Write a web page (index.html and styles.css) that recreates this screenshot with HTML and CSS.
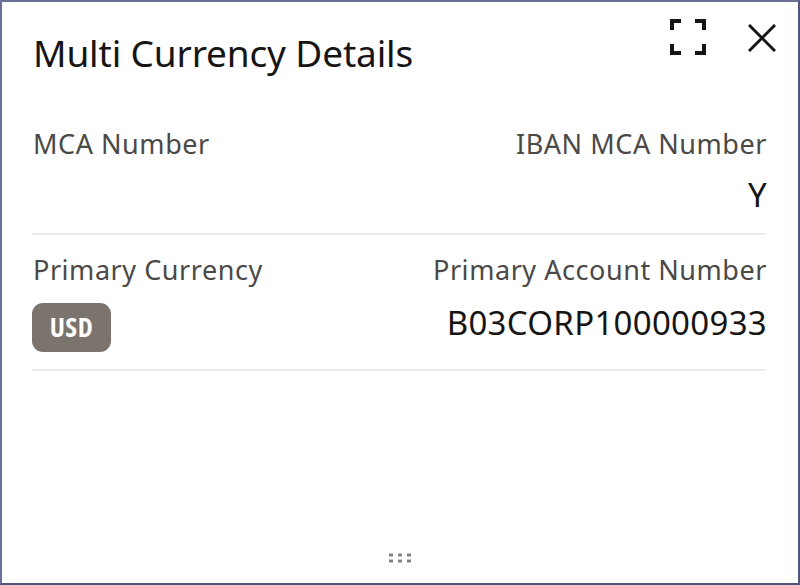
FILE: index.html
```html
<!DOCTYPE html>
<html lang="en">
<head>
<meta charset="UTF-8" />
<meta name="viewport" content="width=device-width, initial-scale=1.0" />
<title>Multi Currency Details</title>
<link rel="stylesheet" href="styles.css">
</head>
<body>

<div class="widget">
  <div class="header">
    <h2>Multi Currency Details</h2>
    <div class="actions">
      <button class="icon-btn" aria-label="Expand">
        <svg class="icon-expand" viewBox="0 0 36 36">
          <path d="M2 11V2H11M25 2H34V11M34 25V34H25M11 34H2V25" />
        </svg>
      </button>
      <button class="icon-btn" aria-label="Close">
        <svg class="icon-close" viewBox="0 0 28 28">
          <path d="M1 1L27 27M27 1L1 27" />
        </svg>
      </button>
    </div>
  </div>

  <div class="row">
    <div class="field">
      <div class="label">MCA Number</div>
    </div>
    <div class="field right">
      <div class="label">IBAN MCA Number</div>
      <div class="value value-y">Y</div>
    </div>
  </div>

  <div class="row row-primary">
    <div class="field">
      <div class="label">Primary Currency</div>
      <div class="badge">USD</div>
    </div>
    <div class="field right">
      <div class="label">Primary Account Number</div>
      <div class="value">B03CORP100000933</div>
    </div>
  </div>

  <div class="handle">
    <svg viewBox="0 0 22 10">
      <path d="M0 2H4M9 2H13M18 2H22M0 8H4M9 8H13M18 8H22" />
    </svg>
  </div>
</div>

</body>
</html>
```
FILE: styles.css
```css
body {
  font-family: "Noto Sans", "Open Sans", sans-serif;
  margin: 0;
  background: #fff;
  color: #161513;
}

.widget {
  display: flex;
  flex-direction: column;
  box-sizing: border-box;
  height: 585px;
  padding: 0 32px 0 30px;
  border: 2px solid #6c7098;
  border-right-color: #50557a;
  border-bottom-color: #50557a;
}

.header {
  display: flex;
  justify-content: space-between;
  height: 114px;
}

h2 {
  margin: 24px 0 0 1px;
  font-size: 37px;
  line-height: 54px;
  font-weight: 400;
  letter-spacing: -0.15px;
  white-space: nowrap;
}

.actions {
  display: flex;
  align-items: flex-start;
  gap: 42px;
  margin: 17px -10px 0 0;
}

.icon-btn {
  display: block;
  padding: 0;
  border: none;
  background: none;
  cursor: pointer;
}

.icon-btn svg {
  display: block;
  fill: none;
  stroke: #161513;
}

.icon-expand {
  width: 36px;
  height: 36px;
  stroke-width: 4;
}

.icon-close {
  width: 28px;
  height: 28px;
  margin-top: 5px;
  stroke-width: 3;
}

.row {
  display: flex;
  justify-content: space-between;
  box-sizing: border-box;
  height: 119px;
  padding-top: 8px;
  border-bottom: 2px solid #ececec;
}

.row-primary {
  height: 136px;
  padding-top: 15px;
}

.right {
  text-align: right;
}

.label {
  margin: 0 -1px 0 1px;
  font-size: 27px;
  line-height: 40px;
  letter-spacing: 0.55px;
  color: #4a4947;
  white-space: nowrap;
}

.value {
  font-size: 33px;
  line-height: 46px;
  letter-spacing: 0.3px;
  margin: 10px -1px 0 0;
}

.value-y {
  margin-top: 8px;
}

.badge {
  display: flex;
  align-items: center;
  justify-content: center;
  box-sizing: border-box;
  width: 79px;
  height: 49px;
  margin-top: 13px;
  padding-bottom: 2px;
  border-radius: 11px;
  background: #7b746d;
  color: #fff;
  font-family: "Open Sans", "Noto Sans", sans-serif;
  font-size: 27px;
  line-height: 36px;
  font-weight: 700;
  font-stretch: 75%;
  letter-spacing: 0.5px;
}

.handle {
  display: flex;
  justify-content: center;
  margin: auto -32px 20px -30px;
}

.handle svg {
  width: 22px;
  height: 10px;
  stroke: #858585;
  stroke-width: 3;
}
```
